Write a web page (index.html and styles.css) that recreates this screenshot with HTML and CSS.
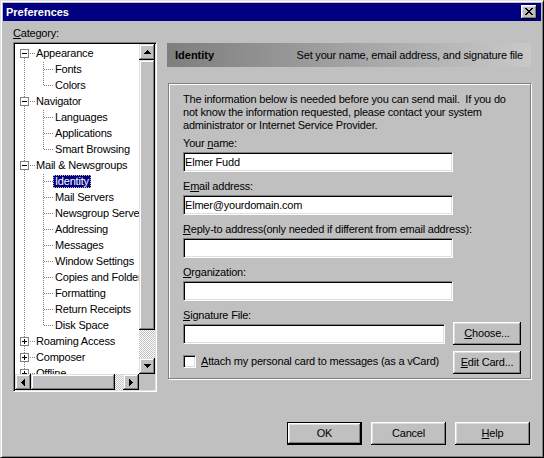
FILE: index.html
```html
<!DOCTYPE html>
<html>
<head>
<meta charset="utf-8">
<title>Preferences</title>
<link rel="stylesheet" href="styles.css">
</head>
<body>
<div class="win">
  <div class="title">
    <span class="title-text">Preferences</span>
    <span class="close"><svg width="8" height="7" viewBox="0 0 8 7" shape-rendering="crispEdges"><g fill="#000"><rect x="0" y="0" width="2" height="1"/><rect x="6" y="0" width="2" height="1"/><rect x="1" y="1" width="2" height="1"/><rect x="5" y="1" width="2" height="1"/><rect x="2" y="2" width="4" height="1"/><rect x="3" y="3" width="2" height="1"/><rect x="2" y="4" width="4" height="1"/><rect x="1" y="5" width="2" height="1"/><rect x="5" y="5" width="2" height="1"/><rect x="0" y="6" width="2" height="1"/><rect x="6" y="6" width="2" height="1"/></g></svg></span>
  </div>
  <div class="main">
    <div class="left">
      <div class="cat-label"><u>C</u>ategory:</div>
      <div class="tree-box">
        <div class="tree-top">
          <div class="tree">
            <div class="node">
              <div class="row root"><span class="exp minus"></span><span class="lbl">Appearance</span></div>
              <div class="kids">
                <div class="row child"><span class="lbl">Fonts</span></div>
                <div class="row child"><span class="lbl">Colors</span></div>
              </div>
            </div>
            <div class="node">
              <div class="row root"><span class="exp minus"></span><span class="lbl">Navigator</span></div>
              <div class="kids">
                <div class="row child"><span class="lbl">Languages</span></div>
                <div class="row child"><span class="lbl">Applications</span></div>
                <div class="row child"><span class="lbl">Smart Browsing</span></div>
              </div>
            </div>
            <div class="node">
              <div class="row root"><span class="exp minus"></span><span class="lbl">Mail &amp; Newsgroups</span></div>
              <div class="kids">
                <div class="row child"><span class="lbl sel">Identity</span></div>
                <div class="row child"><span class="lbl">Mail Servers</span></div>
                <div class="row child"><span class="lbl">Newsgroup Servers</span></div>
                <div class="row child"><span class="lbl">Addressing</span></div>
                <div class="row child"><span class="lbl">Messages</span></div>
                <div class="row child"><span class="lbl">Window Settings</span></div>
                <div class="row child"><span class="lbl">Copies and Folders</span></div>
                <div class="row child"><span class="lbl">Formatting</span></div>
                <div class="row child"><span class="lbl">Return Receipts</span></div>
                <div class="row child"><span class="lbl">Disk Space</span></div>
              </div>
            </div>
            <div class="row root"><span class="exp plus"></span><span class="lbl">Roaming Access</span></div>
            <div class="row root"><span class="exp plus"></span><span class="lbl">Composer</span></div>
            <div class="row root"><span class="exp plus"></span><span class="lbl">Offline</span></div>
          </div>
          <div class="vscroll">
            <div class="sbtn"><svg width="7" height="4" viewBox="0 0 7 4" shape-rendering="crispEdges"><g fill="#000"><rect x="3" y="0" width="1" height="1"/><rect x="2" y="1" width="3" height="1"/><rect x="1" y="2" width="5" height="1"/><rect x="0" y="3" width="7" height="1"/></g></svg></div>
            <div class="vthumb"></div>
            <div class="track"></div>
            <div class="sbtn"><svg width="7" height="4" viewBox="0 0 7 4" shape-rendering="crispEdges"><g fill="#000"><rect x="0" y="0" width="7" height="1"/><rect x="1" y="1" width="5" height="1"/><rect x="2" y="2" width="3" height="1"/><rect x="3" y="3" width="1" height="1"/></g></svg></div>
          </div>
        </div>
        <div class="hscroll">
          <div class="sbtn"><svg width="4" height="7" viewBox="0 0 4 7" shape-rendering="crispEdges"><g fill="#000"><rect x="0" y="3" width="1" height="1"/><rect x="1" y="2" width="1" height="3"/><rect x="2" y="1" width="1" height="5"/><rect x="3" y="0" width="1" height="7"/></g></svg></div>
          <div class="hthumb"></div>
          <div class="track"></div>
          <div class="sbtn"><svg width="4" height="7" viewBox="0 0 4 7" shape-rendering="crispEdges"><g fill="#000"><rect x="0" y="0" width="1" height="7"/><rect x="1" y="1" width="1" height="5"/><rect x="2" y="2" width="1" height="3"/><rect x="3" y="3" width="1" height="1"/></g></svg></div>
          <div class="corner"></div>
        </div>
      </div>
    </div>
    <div class="right">
      <div class="header">
        <span class="h-title">Identity</span>
        <span class="h-desc">Set your name, email address, and signature file</span>
      </div>
      <div class="group">
        <p class="info">The information below is needed before you can send mail.&nbsp; If you do<br>not know the information requested, please contact your system<br>administrator or Internet Service Provider.</p>
        <div class="field-label">Your <u>n</u>ame:</div>
        <input class="field" type="text" value="Elmer Fudd">
        <div class="field-label">E<u>m</u>ail address:</div>
        <input class="field" type="text" value="Elmer@yourdomain.com">
        <div class="field-label"><u>R</u>eply-to address(only needed if different from email address):</div>
        <input class="field" type="text" value="">
        <div class="field-label"><u>O</u>rganization:</div>
        <input class="field" type="text" value="">
        <div class="field-label last"><u>S</u>ignature File:</div>
        <div class="sig-row">
          <input class="field sig" type="text" value="">
          <button class="btn small"><u>C</u>hoose...</button>
        </div>
        <div class="check-row">
          <span class="checkbox"></span>
          <span class="check-text"><u>A</u>ttach my personal card to messages (as a vCard)</span>
          <button class="btn small"><u>E</u>dit Card...</button>
        </div>
      </div>
    </div>
  </div>
  <div class="buttons">
    <button class="btn default">OK</button>
    <button class="btn">Cancel</button>
    <button class="btn"><u>H</u>elp</button>
  </div>
</div>
</body>
</html>
```

FILE: styles.css
```css
* {
  box-sizing: border-box;
}

body {
  margin: 0;
  background: #c0c0c0;
  font: 11px/13px "Liberation Sans", Arial, sans-serif;
  letter-spacing: -0.2px;
  color: #000;
}

u {
  text-decoration: underline;
  text-underline-offset: 1px;
}

.win {
  width: 544px;
  height: 458px;
  background: #c0c0c0;
  border: 1px solid;
  border-color: #dfdfdf #000 #000 #dfdfdf;
  box-shadow: inset 1px 1px #fff, inset -1px -1px #808080;
  padding: 2px;
}

.title {
  height: 18px;
  background: #000080;
  display: flex;
  align-items: center;
  justify-content: space-between;
  padding: 0 4px 0 3px;
}

.title-text {
  color: #fff;
  font-weight: bold;
  letter-spacing: 0;
}

.close {
  width: 16px;
  height: 14px;
  background: #c0c0c0;
  box-shadow: inset -1px -1px #000, inset 1px 1px #fff, inset -2px -2px #808080, inset 2px 2px #dfdfdf;
  display: flex;
  align-items: center;
  justify-content: center;
  padding-bottom: 1px;
}

.close svg {
  display: block;
}

.main {
  display: flex;
  gap: 10px;
  padding: 6px 0 0 10px;
}

.left {
  width: 144px;
}

.cat-label {
  height: 13px;
  margin-bottom: 2px;
}

.tree-box {
  width: 144px;
  height: 350px;
  border: 1px solid;
  border-color: #808080 #fff #fff #808080;
  box-shadow: inset 1px 1px #000, inset -1px -1px #dfdfdf;
  padding: 1px;
  background: #fff;
}

.tree-top {
  display: flex;
  height: 330px;
}

.tree {
  width: 124px;
  height: 330px;
  padding-top: 1px;
  overflow: hidden;
  background-color: #fff;
  background-image: repeating-linear-gradient(to bottom, #808080 0 1px, transparent 1px 2px);
  background-size: 1px 100%;
  background-position: 9px 10px;
  background-repeat: no-repeat;
}

.row {
  height: 16px;
  display: flex;
  align-items: center;
  white-space: nowrap;
}

.root {
  background-image: repeating-linear-gradient(to right, #808080 0 1px, transparent 1px 2px);
  background-size: 5px 1px;
  background-position: 15px 8px;
  background-repeat: no-repeat;
}

.exp {
  flex: none;
  width: 9px;
  height: 9px;
  margin-left: 5px;
  border: 1px solid #808080;
  background-color: #fff;
  background-repeat: no-repeat;
  background-position: center;
}

.exp.minus {
  background-image: linear-gradient(#000, #000);
  background-size: 5px 1px;
}

.exp.plus {
  background-image: linear-gradient(#000, #000), linear-gradient(#000, #000);
  background-size: 5px 1px, 1px 5px;
}

.root .lbl {
  margin-left: 5px;
}

.lbl {
  height: 13px;
  line-height: 13px;
  padding: 0 2px;
}

.kids {
  background-image: repeating-linear-gradient(to bottom, #808080 0 1px, transparent 1px 2px);
  background-size: 1px calc(100% - 8px);
  background-position: 28px 1px;
  background-repeat: no-repeat;
}

.child {
  background-image: repeating-linear-gradient(to right, #808080 0 1px, transparent 1px 2px);
  background-size: 9px 1px;
  background-position: 29px 8px;
  background-repeat: no-repeat;
}

.child .lbl {
  margin-left: 38px;
}

.lbl.sel {
  background: #000080;
  color: #fff;
  outline: 1px dotted #c0c0c0;
  outline-offset: -1px;
}

.vscroll {
  width: 16px;
  display: flex;
  flex-direction: column;
}

.sbtn {
  flex: none;
  width: 16px;
  height: 16px;
  background: #c0c0c0;
  box-shadow: inset -1px -1px #000, inset 1px 1px #dfdfdf, inset -2px -2px #808080, inset 2px 2px #fff;
  display: flex;
  align-items: center;
  justify-content: center;
}

.sbtn svg {
  display: block;
}

.vthumb {
  flex: none;
  height: 270px;
  background: #c0c0c0;
  box-shadow: inset -1px -1px #000, inset 1px 1px #dfdfdf, inset -2px -2px #808080, inset 2px 2px #fff;
}

.track {
  flex: 1;
  background: repeating-conic-gradient(#c0c0c0 0 25%, #fff 0 50%) 0 0 / 2px 2px;
}

.hscroll {
  display: flex;
  height: 16px;
}

.hthumb {
  flex: none;
  width: 84px;
  background: #c0c0c0;
  box-shadow: inset -1px -1px #000, inset 1px 1px #dfdfdf, inset -2px -2px #808080, inset 2px 2px #fff;
}

.corner {
  flex: none;
  width: 16px;
  background: #c0c0c0;
}

.right {
  width: 364px;
  padding-top: 16px;
}

.header {
  height: 24px;
  display: flex;
  align-items: center;
  justify-content: space-between;
  padding: 0 8px 0 8px;
  background: linear-gradient(to right, #7e7e7e, #c8c8c8);
}

.h-title {
  font-weight: bold;
  letter-spacing: 0;
}

.group {
  margin-top: 16px;
  margin-left: 1px;
  height: 296px;
  border: 1px solid #808080;
  box-shadow: inset 1px 1px #fff, 1px 1px #fff;
  padding: 9px 9px 4px 14px;
}

.info {
  margin: 0 0 5px 0;
}

.field-label {
  height: 13px;
  margin-bottom: 2px;
}

.field-label.last {
  margin-bottom: 0;
}

.field {
  display: block;
  width: 270px;
  height: 20px;
  margin: 0 0 8px 0;
  padding: 0 0 0 1px;
  border: 1px solid;
  border-color: #808080 #fff #fff #808080;
  box-shadow: inset 1px 1px #000, inset -1px -1px #dfdfdf;
  background: #fff;
  font: inherit;
  letter-spacing: inherit;
  color: #000;
  outline: none;
}

.sig-row {
  display: flex;
  align-items: center;
  height: 23px;
  gap: 8px;
}

.field.sig {
  width: 262px;
  margin: 0;
}

.check-row {
  display: flex;
  align-items: center;
  height: 23px;
  margin-top: 6px;
}

.checkbox {
  flex: none;
  width: 13px;
  height: 13px;
  margin-bottom: 3px;
  border: 1px solid;
  border-color: #808080 #fff #fff #808080;
  box-shadow: inset 1px 1px #000, inset -1px -1px #dfdfdf;
  background: #fff;
}

.check-text {
  margin-left: 5px;
  margin-bottom: 3px;
  flex: 1;
}

.btn {
  width: 75px;
  height: 23px;
  padding: 0;
  border: none;
  background: #c0c0c0;
  box-shadow: inset -1px -1px #000, inset 1px 1px #fff, inset -2px -2px #808080, inset 2px 2px #dfdfdf;
  font: inherit;
  letter-spacing: inherit;
  color: #000;
  text-align: center;
}

.btn.small {
  width: 68px;
}

.btn.default {
  border: 1px solid #000;
}

.buttons {
  display: flex;
  justify-content: flex-end;
  gap: 9px;
  padding-right: 11px;
  margin-top: 30px;
}
```
